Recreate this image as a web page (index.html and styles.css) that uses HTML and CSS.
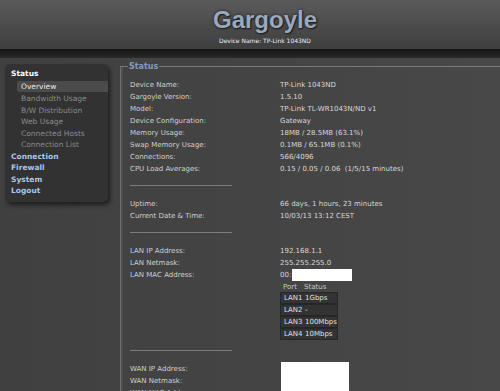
FILE: index.html
```html
<!DOCTYPE html>
<html lang="en">
<head>
    <meta charset="UTF-8">
    <title>Gargoyle - Status</title>
    <link rel="stylesheet" href="styles.css">
</head>
<body>
    <div class="header">
        <h1 class="logo">Gargoyle</h1>
        <div class="device">Device Name: TP-Link 1043ND</div>
    </div>
    <div class="band"></div>
    <div class="main">
        <div class="nav">
            <div class="nav-top">Status</div>
            <div class="nav-sub active">Overview</div>
            <div class="nav-sub">Bandwidth Usage</div>
            <div class="nav-sub">B/W Distribution</div>
            <div class="nav-sub">Web Usage</div>
            <div class="nav-sub">Connected Hosts</div>
            <div class="nav-sub">Connection List</div>
            <div class="nav-top link">Connection</div>
            <div class="nav-top link">Firewall</div>
            <div class="nav-top link">System</div>
            <div class="nav-top link">Logout</div>
        </div>
        <fieldset class="panel">
            <legend>Status</legend>
            <div class="rows">
                <div class="row"><span class="label">Device Name:</span><span>TP-Link 1043ND</span></div>
                <div class="row"><span class="label">Gargoyle Version:</span><span>1.5.10</span></div>
                <div class="row"><span class="label">Model:</span><span>TP-Link TL-WR1043N/ND v1</span></div>
                <div class="row"><span class="label">Device Configuration:</span><span>Gateway</span></div>
                <div class="row"><span class="label">Memory Usage:</span><span>18MB / 28.5MB (63.1%)</span></div>
                <div class="row"><span class="label">Swap Memory Usage:</span><span>0.1MB / 65.1MB (0.1%)</span></div>
                <div class="row"><span class="label">Connections:</span><span>566/4096</span></div>
                <div class="row"><span class="label">CPU Load Averages:</span><span>0.15 / 0.05 / 0.06 &nbsp;(1/5/15 minutes)</span></div>
            </div>
            <hr class="sep">
            <div class="rows">
                <div class="row"><span class="label">Uptime:</span><span>66 days, 1 hours, 23 minutes</span></div>
                <div class="row"><span class="label">Current Date &amp; Time:</span><span>10/03/13 13:12 CEST</span></div>
            </div>
            <hr class="sep">
            <div class="rows">
                <div class="row"><span class="label">LAN IP Address:</span><span>192.168.1.1</span></div>
                <div class="row"><span class="label">LAN Netmask:</span><span>255.255.255.0</span></div>
                <div class="row"><span class="label">LAN MAC Address:</span><span>00:<span class="blank mac"></span></span></div>
            </div>
            <div class="ports">
                <div class="port-head"><span class="pc">Port</span><span>Status</span></div>
                <div class="port"><span class="pc">LAN1</span><span>1Gbps</span></div>
                <div class="port"><span class="pc">LAN2</span><span>-</span></div>
                <div class="port"><span class="pc">LAN3</span><span>100Mbps</span></div>
                <div class="port"><span class="pc">LAN4</span><span>10Mbps</span></div>
            </div>
            <hr class="sep">
            <div class="rows wan">
                <div class="row"><span class="label">WAN IP Address:</span><span></span></div>
                <div class="row"><span class="label">WAN Netmask:</span><span></span></div>
                <div class="row"><span class="label">WAN MAC Address:</span><span></span></div>
                <div class="blank wan-box"></div>
            </div>
        </fieldset>
    </div>
</body>
</html>
```

FILE: styles.css
```css
html, body {
    margin: 0;
    height: 100%;
    overflow: hidden;
}
body {
    font-family: "DejaVu Sans", Verdana, sans-serif;
    font-size: 7px;
    background: #434343;
    color: #d8d8d8;
}
.header {
    height: 49px;
    padding-left: 30px;
    background: linear-gradient(#5a5a5a, #3e3e3e);
    text-align: center;
}
.logo {
    margin: 0;
    padding-top: 6px;
    font-family: "Liberation Sans", Arial, sans-serif;
    font-size: 24px;
    line-height: 27px;
    font-weight: bold;
    color: #9aa9bb;
    text-shadow: 0 0 3px #1a1a1a, 1px 1px 1px #222;
}
.device {
    margin-top: 4px;
    font-size: 6px;
    color: #f0f0f0;
}
.band {
    height: 9px;
    background: linear-gradient(#151515, #2a2a2a);
}
.main {
    display: flex;
    align-items: flex-start;
    background: linear-gradient(90deg, #404040, #484848);
    height: 100%;
}
.nav {
    width: 103px;
    margin: 6px 0 0 5px;
    padding: 4px 0 5px;
    background: #323232;
    border-radius: 5px;
    box-shadow: 2px 3px 4px #1e1e1e;
    flex-shrink: 0;
}
.nav-top {
    padding-left: 6px;
    font-weight: bold;
    font-size: 7.5px;
    line-height: 11.5px;
    color: #ffffff;
}
.nav-top.link {
    color: #a9c6e8;
}
.nav-sub {
    padding-left: 16px;
    line-height: 11.5px;
    font-size: 7.5px;
    color: #8a8a8a;
}
.nav-sub.active {
    margin: 1px 0 1px 12px;
    padding-left: 4px;
    background: #4b4b4b;
    color: #e8e8e8;
    border-radius: 2px 0 0 2px;
}
.panel {
    flex: 1;
    margin: 4px 0 0 12px;
    padding: 8px 0 0 9px;
    min-width: 0;
    border: none;
    border-top: 1px solid #7a7a7a;
    border-left: 1px solid #6e6e6e;
    box-shadow: inset 2px 0 0 #4f4f4f;
    height: 400px;
}
.panel legend {
    padding: 0 1px;
    margin-left: -2px;
    font-weight: bold;
    font-size: 8px;
    color: #7f9cc6;
}
.row {
    display: flex;
    line-height: 12px;
}
.label {
    width: 150px;
    flex-shrink: 0;
    color: #d0d0d0;
}
.sep {
    width: 102px;
    margin: 10px 0 12px;
    border: none;
    border-top: 1px solid #7c7c7c;
}
.blank {
    display: inline-block;
    background: #ffffff;
}
.mac {
    width: 60px;
    height: 12px;
    vertical-align: middle;
    margin-left: 1px;
}
.ports {
    margin: 2px 0 0 150px;
    width: 58px;
}
.port-head {
    display: flex;
    line-height: 9px;
    color: #c8c8c8;
}
.port {
    display: flex;
    line-height: 10px;
    background: #333333;
    border: 1px solid #262626;
    border-top: none;
    box-shadow: inset 0 1px 0 #262626;
    padding-top: 1px;
    color: #e0e0e0;
}
.port:nth-child(2) {
    border-top: 1px solid #262626;
    padding-top: 0;
    box-shadow: none;
}
.pc {
    width: 21px;
    padding-left: 3px;
}
.wan {
    position: relative;
}
.wan-box {
    position: absolute;
    left: 151px;
    top: -1px;
    width: 68px;
    height: 60px;
}
```
